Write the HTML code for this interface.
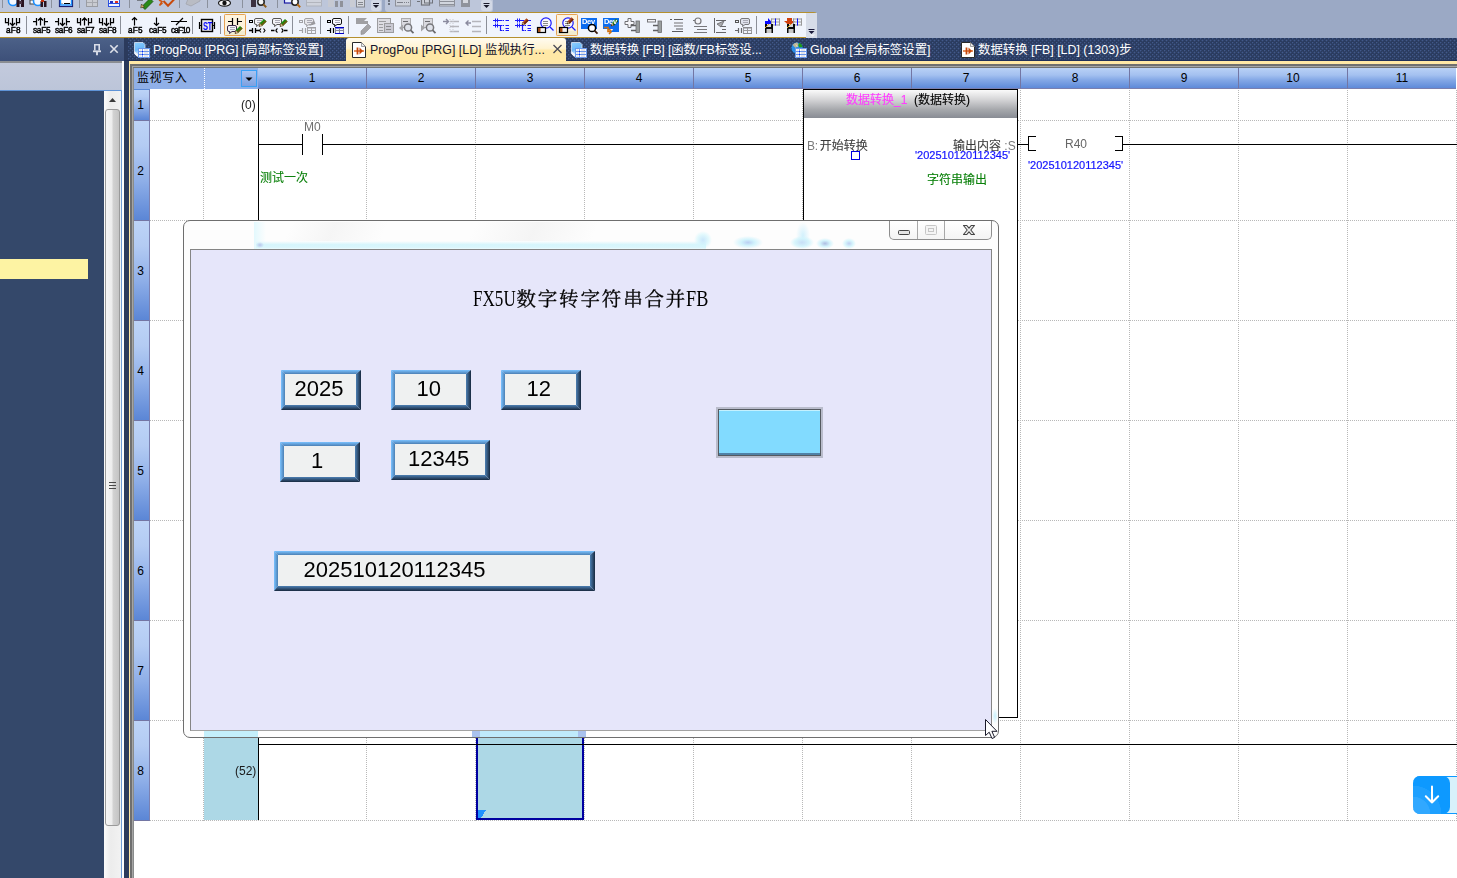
<!DOCTYPE html>
<html lang="zh-CN">
<head>
<meta charset="utf-8">
<title>ProgPou [PRG] [LD]</title>
<style>
*{box-sizing:border-box;margin:0;padding:0}
html,body{width:1457px;height:878px;overflow:hidden;background:#fff}
body{position:relative;font-family:"Liberation Sans","Noto Sans CJK SC",sans-serif;font-size:12px;color:#000}
.a{position:absolute}
.t{position:absolute;white-space:nowrap;line-height:1}
svg{position:absolute;overflow:visible}
/* top toolbars */
#topbg{left:0;top:0;width:1457px;height:38px;background:#9ba9c5}
#tb1a{left:0;top:0;width:382px;height:12px;background:#bdc6da;border-radius:0 0 3px 0}
#tb1b{left:385px;top:0;width:108px;height:12px;background:#bdc6da;border-radius:0 0 3px 3px}
#tb2{left:0;top:12px;width:817px;height:26px;background:#f0f4fc;border-top:1px solid #b4902f;border-bottom:1px solid #b4902f;border-right:1px solid #c9b06a;border-radius:0 3px 3px 0}
.sep{position:absolute;width:1px;background:#8d929c}
.lab{position:absolute;white-space:nowrap;font-size:8.2px;line-height:8px;letter-spacing:-0.2px;color:#000;-webkit-text-stroke:0.45px #000;will-change:transform;font-family:"Liberation Sans",sans-serif}
.hot{position:absolute;top:14px;width:23px;height:23px;background:#fdeccb;border:1px solid #e8a453;border-radius:2px}
/* tab strip */
#tabs{left:124px;top:38px;width:1333px;height:840px;background:#2b3a5c}
#tabtex{left:128px;top:38px;width:1329px;height:22px;background-color:#2a3b5f;background-image:radial-gradient(circle at 0.5px 0.5px,#42598a 0.6px,rgba(66,89,138,0) 1.2px),radial-gradient(circle at 2.5px 2.5px,#42598a 0.6px,rgba(66,89,138,0) 1.2px);background-size:4px 4px;border-bottom:0}
#tabline{left:124px;top:60px;width:1333px;height:1px;background:#1f2f58}
#edbg{left:134px;top:68px;width:1323px;height:810px;background:#fff}
.tabt{position:absolute;white-space:nowrap;top:43px;font-size:12.4px;line-height:14px;color:#fff;font-family:"Liberation Sans","Noto Sans CJK SC",sans-serif}
/* left panel */
#lp{left:0;top:38px;width:124px;height:840px;background:#34486a}
#lph{left:0;top:38px;width:124px;height:23px;background:linear-gradient(#4c6188,#3d5079)}
/* grid */
#colhdr{left:134px;top:68px;width:1323px;height:21px}
.ch{position:absolute;top:68px;height:21px;background:linear-gradient(#b9d1f6 0%,#a4c1f0 35%,#84a8e6 60%,#5e8ad9 100%);border-left:1px solid #7376a4;border-bottom:1px solid #7a7fae;text-align:center;font-size:12px;line-height:21px;color:#000}
.rh{position:absolute;left:134px;width:16px;padding-right:2px;background:linear-gradient(#bdd4f7 0%,#b3cbf3 25%,#8fafe8 60%,#5b86d6 100%);border-right:1px solid #7b80b0;border-bottom:1px solid #7376a4;font-size:12px;text-align:center;color:#000}
.num{font-family:"Liberation Sans",sans-serif}
.cj{-webkit-text-stroke:0.1px currentColor}
.bl{-webkit-text-stroke:0.2px #1414ff}
</style>
</head>
<body>
<div class="a" id="topbg"></div>
<div class="a" id="tb1a"></div>
<div class="a" id="tb1b"></div>
<div class="a" id="tb2"></div>
<svg style="left:0;top:0" width="1457" height="38" viewBox="0 0 1457 38"><g><rect x="2" y="0" width="1" height="8" fill="#8b919d"/><rect x="51" y="0" width="1" height="8" fill="#8b919d"/><rect x="79" y="0" width="1" height="8" fill="#8b919d"/><rect x="129" y="0" width="1" height="8" fill="#8b919d"/><rect x="179" y="0" width="1" height="8" fill="#8b919d"/><rect x="207" y="0" width="1" height="8" fill="#8b919d"/><rect x="242" y="0" width="1" height="8" fill="#8b919d"/><rect x="277" y="0" width="1" height="8" fill="#8b919d"/><circle cx="13" cy="1" r="4.5" fill="#f4f8ff" stroke="#1e90ff" stroke-width="1.600"/><rect x="16.5" y="0" width="3" height="7" fill="#2a1420"/><rect x="21" y="0" width="3" height="7" fill="#2a1420"/><rect x="19" y="1" width="3" height="3" fill="#463040"/><rect x="30" y="0" width="6" height="4" fill="#f2f6ff" stroke="#444" stroke-width="1"/><circle cx="38" cy="1" r="4.5" fill="#f4f8ff" stroke="#1e90ff" stroke-width="1.600"/><rect x="40.5" y="1" width="2.5" height="6" fill="#2a1420"/><rect x="44" y="1" width="2.5" height="6" fill="#2a1420"/><rect x="41" y="0" width="3" height="2" fill="#c03010"/><rect x="59.5" y="-2" width="13" height="8.5" fill="#fff" stroke="#1e1e6e" stroke-width="1.2"/><rect x="60.5" y="-2" width="11" height="7" fill="none" stroke="#1e90ff" stroke-width="1.4"/><rect x="64" y="3" width="6" height="1" fill="#000"/><rect x="61.5" y="3" width="1" height="1" fill="#777"/><rect x="86.5" y="-2" width="11" height="8.5" fill="#c9cbd1" stroke="#9a9ca2" stroke-width="1"/><path d="M87 2.5h10M92.5 0v6" stroke="#a6a8ae" stroke-width="1" fill="none"/><rect x="108.5" y="-2" width="11" height="8.5" fill="#eef2ff" stroke="#2a50e0" stroke-width="1"/><path d="M109 3.5h10" stroke="#2a50e0" stroke-width="1" fill="none"/><rect x="115" y="1" width="3" height="2" fill="#e03020"/><rect x="110" y="1" width="3" height="2" fill="#2030c0"/><path d="M142 6.5l8 -8l3 3l-8 8z" fill="#2a8a18" stroke="#14500c" stroke-width="0.800"/><path d="M141.5 4l3 3l-3.800 .800z" fill="#d9b070" stroke="#3a2a10" stroke-width="0.600"/><path d="M137 0h6" stroke="#333" stroke-width="1" fill="none"/><path d="M159 0l3 1.5l-2.5 4l3 -2.5" stroke="#d0540e" stroke-width="1.5" fill="none"/><path d="M163.5 1l4.5 4.800l6.5 -6.800" stroke="#c84a0c" stroke-width="2" fill="none"/><path d="M186 4l5 2l9 -5v-2h-12z" fill="#b9bcc4" stroke="#a2a5ad" stroke-width="0.800"/><ellipse cx="224.5" cy="3" rx="6" ry="3.200" fill="#f5f5f5" stroke="#1a1a1a" stroke-width="1.200"/><circle cx="224.5" cy="3" r="2.200" fill="#111"/><rect x="251" y="0" width="5" height="7" fill="#3a3040"/><circle cx="261" cy="2" r="3.2" fill="#f4f4f4" stroke="#222" stroke-width="1.5"/><path d="M263.24 4.24l3 3" stroke="#8a5a1a" stroke-width="1.8" fill="none"/><rect x="284.5" y="-2" width="10" height="5" fill="#e6eeff" stroke="#1818a0" stroke-width="1.2"/><circle cx="295" cy="2" r="3.2" fill="#fdfdfd" stroke="#222" stroke-width="1.5"/><path d="M297.24 4.24l3 3" stroke="#b86a10" stroke-width="1.8" fill="none"/><rect x="306.5" y="-2" width="15" height="8" fill="#cfd3dc" stroke="#aeb2bc" stroke-width="1"/><path d="M307 2.5h15" stroke="#b2b5bd" stroke-width="1" fill="none"/><rect x="328" y="0" width="6" height="7" fill="#c6c9d2"/><rect x="335" y="1" width="3" height="6" fill="#8f929b"/><rect x="340" y="1" width="3" height="6" fill="#8f929b"/><rect x="350" y="0" width="5" height="7" fill="#c9ccd4"/><rect x="356.5" y="-1" width="8" height="8" fill="#d5d8df" stroke="#85888f" stroke-width="1"/><path d="M358 2.5h5M358 4.5h5" stroke="#85888f" stroke-width="1" fill="none"/><rect x="371" y="0" width="10" height="11" fill="#d3d9e6" rx="2"/><path d="M373 3.5h6" stroke="#1a1a2a" stroke-width="1" fill="none"/><path d="M373 5h6l-3 3z" fill="#1a1a2a"/><rect x="388" y="0" width="2" height="2" fill="#6d7380"/><rect x="388" y="3" width="2" height="2" fill="#6d7380"/><rect x="395.5" y="-2" width="15" height="8" fill="#cdd1da" stroke="#8d9099" stroke-width="1"/><path d="M397 2.5h6M404 2.5h1M406 2.5h1M408 2.5h1" stroke="#7d8089" stroke-width="1" fill="none"/><rect x="421.5" y="-2" width="8" height="7" fill="#cdd1da" stroke="#6f727a" stroke-width="1.2"/><rect x="424.5" y="-2" width="8" height="5" fill="none" stroke="#6f727a" stroke-width="1"/><path d="M417 1.5h3" stroke="#6f727a" stroke-width="1" fill="none"/><rect x="439.5" y="-2" width="15" height="8" fill="#d2d6de" stroke="#8d9099" stroke-width="1"/><path d="M440 1.5h14M440 4.5h14" stroke="#8d9099" stroke-width="1" fill="none"/><rect x="461" y="0" width="9" height="7" fill="#8f939c"/><rect x="463" y="0" width="5" height="3" fill="#d5d8df"/><rect x="481" y="0" width="11" height="11" fill="#d3d9e6" rx="2"/><path d="M483.5 3.5h6" stroke="#1a1a2a" stroke-width="1" fill="none"/><path d="M483.5 5h6l-3 3z" fill="#1a1a2a"/></g><g><rect x="26" y="16" width="1" height="18" fill="#8b8f98"/><rect x="120" y="16" width="1" height="18" fill="#8b8f98"/><rect x="192" y="16" width="1" height="18" fill="#8b8f98"/><rect x="220" y="16" width="1" height="18" fill="#8b8f98"/><rect x="292" y="16" width="1" height="18" fill="#8b8f98"/><rect x="320" y="16" width="1" height="18" fill="#8b8f98"/><rect x="348" y="16" width="1" height="18" fill="#8b8f98"/><rect x="486" y="16" width="1" height="18" fill="#8b8f98"/><rect x="756" y="16" width="1" height="18" fill="#8b8f98"/><rect x="224.5" y="14.5" width="21" height="21" fill="#fdf3dc" stroke="#e6a255" stroke-width="1" rx="0.8"/><rect x="225" y="31" width="20" height="4" fill="#f1ecd0"/><rect x="556.5" y="14.5" width="21" height="21" fill="#fdf3dc" stroke="#e6a255" stroke-width="1" rx="0.8"/><rect x="557" y="31" width="20" height="4" fill="#f1ecd0"/><path d="M5.5 18v4.5h3M8.5 18v7.5M12.5 18V25.5M10.0 23.0L12.5 25.5L15.0 23.0M16.5 18v7.5M16.5 22.5h3v-4.5" stroke="#000" stroke-width="1.25" fill="none"/><path d="M33 21.5h3.5M36.5 18v7.5M40.5 18V25.5M38.0 20.5L40.5 18L43.0 20.5M44.5 18v7.5M44.5 21.5h3.5" stroke="#000" stroke-width="1.25" fill="none"/><path d="M55 21.5h3.5M58.5 18v7.5M62.5 18V25.5M60.0 23.0L62.5 25.5L65.0 23.0M66.5 18v7.5M66.5 21.5h3.5" stroke="#000" stroke-width="1.25" fill="none"/><path d="M77.5 18v4.5h3M80.5 18v7.5M84.5 18V25.5M82.0 20.5L84.5 18L87.0 20.5M88.5 18v7.5M88.5 22.5h3v-4.5" stroke="#000" stroke-width="1.25" fill="none"/><path d="M99.5 18v4.5h3M102.5 18v7.5M106.5 18V25.5M104.0 23.0L106.5 25.5L109.0 23.0M110.5 18v7.5M110.5 22.5h3v-4.5" stroke="#000" stroke-width="1.25" fill="none"/><path d="M134.5 17.5V25.5M132.0 20.0L134.5 17.5L137.0 20.0" stroke="#000" stroke-width="1.2" fill="none"/><path d="M156.5 17.5V25.5M154.0 23.0L156.5 25.5L159.0 23.0" stroke="#000" stroke-width="1.2" fill="none"/><path d="M171 21.5h16M176 25l7 -7" stroke="#000" stroke-width="1.2" fill="none"/><rect x="201.5" y="19.5" width="11" height="12" fill="#e9e9ee" stroke="#000" stroke-width="1.4"/><path d="M199.5 22v7M214.5 22v7M199 25.5h2M213 25.5h2" stroke="#000" stroke-width="1.2" fill="none"/><path d="M228 21.5h4.5M232.5 18v7M237.5 18v7M237.5 21.5h4.5" stroke="#000" stroke-width="1.2" fill="none"/><path d="M229 25.5h6q1.5 0 1.5 1.5v3q0 1.5 -1.5 1.5h-3l-2.5 2l.300 -2h-.800q-1.5 0 -1.5 -1.5v-3q0 -1.5 1.5 -1.5z" fill="#f4f4f8" stroke="#3a2a4a" stroke-width="1"/><path d="M229.5 27.5h5M229.5 29.5h5" stroke="#a9a9b4" stroke-width="1" fill="none" shape-rendering="crispEdges"/><path d="M235.66 30.31L240.05 25.93L242.57 28.45L238.19 32.84z" fill="#1a8a10"/><path d="M236.92 31.58L241.31 27.19L242.57 28.45L238.19 32.84z" fill="#6a5a10"/><path d="M235 33.5L235.66 30.31L238.19 32.84z" fill="#f0d49a" stroke="#4a2a10" stroke-width="0.5"/><path d="M235 33.5l1.300 -0.300l-1 -1z" fill="#2a1408"/><rect x="249.5" y="20.5" width="3" height="2" fill="none" stroke="#000" stroke-width="1"/><path d="M256 18.5h6q1.5 0 1.5 1.5v3q0 1.5 -1.5 1.5h-3l-2.5 2l.300 -2h-.800q-1.5 0 -1.5 -1.5v-3q0 -1.5 1.5 -1.5z" fill="#f4f4f8" stroke="#555" stroke-width="1"/><path d="M256.5 20.5h5M256.5 22.5h5" stroke="#a9a9b4" stroke-width="1" fill="none" shape-rendering="crispEdges"/><path d="M259.66 23.31L264.05 18.93L266.57 21.45L262.19 25.84z" fill="#1a8a10"/><path d="M260.92 24.58L265.31 20.19L266.57 21.45L262.19 25.84z" fill="#6a5a10"/><path d="M259 26.5L259.66 23.31L262.19 25.84z" fill="#f0d49a" stroke="#4a2a10" stroke-width="0.5"/><path d="M259 26.5l1.300 -0.300l-1 -1z" fill="#2a1408"/><path d="M249 30.5h3M252.5 28v5M255.5 28v5M255.5 30.5h4" stroke="#000" stroke-width="1.3" fill="none"/><path d="M261 28.5l-1.5 2l1.5 2M263.5 28.5l1.5 2l-1.5 2" stroke="#000" stroke-width="1.1" fill="none"/><path d="M274 18.5h6q1.5 0 1.5 1.5v3q0 1.5 -1.5 1.5h-3l-2.5 2l.300 -2h-.800q-1.5 0 -1.5 -1.5v-3q0 -1.5 1.5 -1.5z" fill="#f4f4f8" stroke="#555" stroke-width="1"/><path d="M274.5 20.5h5M274.5 22.5h5" stroke="#a9a9b4" stroke-width="1" fill="none" shape-rendering="crispEdges"/><path d="M280.66 23.31L285.05 18.93L287.57 21.45L283.19 25.84z" fill="#1a8a10"/><path d="M281.92 24.58L286.31 20.19L287.57 21.45L283.19 25.84z" fill="#6a5a10"/><path d="M280 26.5L280.66 23.31L283.19 25.84z" fill="#f0d49a" stroke="#4a2a10" stroke-width="0.5"/><path d="M280 26.5l1.300 -0.300l-1 -1z" fill="#2a1408"/><path d="M271 30.5h3.5M277.5 28.5q-3 2 0 4M281.5 28.5q3 2 0 4M284 30.5h3.5" stroke="#000" stroke-width="1.3" fill="none"/><rect x="299.5" y="20.5" width="3" height="2" fill="none" stroke="#a2a2a6" stroke-width="1"/><path d="M306 18.5h6q1.5 0 1.5 1.5v3q0 1.5 -1.5 1.5h-3l-2.5 2l.300 -2h-.800q-1.5 0 -1.5 -1.5v-3q0 -1.5 1.5 -1.5z" fill="#e6e6ea" stroke="#a2a2a6" stroke-width="1"/><path d="M306.5 20.5h5M306.5 22.5h5" stroke="#a9a9b4" stroke-width="1" fill="none" shape-rendering="crispEdges"/><path d="M309 26l5 -6l1.5 4z" fill="#9a9a9e"/><path d="M299 30.5h3M302.5 28v5M305.5 28v5" stroke="#a2a2a6" stroke-width="1.2" fill="none"/><rect x="307" y="27" width="9" height="1.5" fill="#a0a0a4"/><rect x="307" y="33" width="9" height="1" fill="#a0a0a4"/><path d="M307 30.5h9M307.5 28v5M311.5 28v5M315.5 28v5" stroke="#a8a8ac" stroke-width="1" fill="none"/><rect x="327.5" y="20.5" width="3" height="2" fill="none" stroke="#000" stroke-width="1"/><path d="M334 18.5h6q1.5 0 1.5 1.5v3q0 1.5 -1.5 1.5h-3l-2.5 2l.300 -2h-.800q-1.5 0 -1.5 -1.5v-3q0 -1.5 1.5 -1.5z" fill="#fbfbff" stroke="#111" stroke-width="1"/><path d="M334.5 20.5h5M334.5 22.5h5" stroke="#a9a9b4" stroke-width="1" fill="none" shape-rendering="crispEdges"/><path d="M327 30.5h3M330.5 28v5M333.5 28v5" stroke="#000" stroke-width="1.2" fill="none"/><rect x="335" y="27" width="9" height="1.5" fill="#0000c8"/><rect x="335" y="33" width="9" height="1" fill="#0000c8"/><path d="M335 30.5h9M335.5 28v5M339.5 28v5M343.5 28v5" stroke="#8a8a9a" stroke-width="1" fill="none"/><path d="M356 18h11l-3 3l4 0l0 3h-12z" fill="#a0a0a3"/><path d="M361 31l7 -7l3 3l-7 7l-3 .5z" fill="#a4a4a7" stroke="#8b8b8e" stroke-width="0.600"/><rect x="377.5" y="18.5" width="13" height="14" fill="#dcdce2" stroke="#9c9c9f" stroke-width="1"/><path d="M379 21.5h7M379 24.5h4M379 27.5h4M379 30.5h4" stroke="#9c9c9f" stroke-width="1" fill="none"/><rect x="384.5" y="23.5" width="9" height="9" fill="#c9c9d2" stroke="#9c9c9f" stroke-width="1"/><path d="M386 26.5h5M386 29.5h5" stroke="#8a8a8e" stroke-width="1" fill="none"/><rect x="401.5" y="18.5" width="9" height="9" fill="#d9d9df" stroke="#aaaaae" stroke-width="1"/><path d="M403 21.5h5" stroke="#6a6a6e" stroke-width="1" fill="none"/><circle cx="408" cy="27.5" r="3.6" fill="#dfe2ea" stroke="#77777b" stroke-width="1.5"/><path d="M410.52 30.02l3 3" stroke="#6b6b6f" stroke-width="1.8" fill="none"/><path d="M399 28l4 -3.5v7z" fill="#a4a4a8"/><rect x="423.5" y="18.5" width="9" height="9" fill="#d9d9df" stroke="#aaaaae" stroke-width="1"/><path d="M425 21.5h5" stroke="#6a6a6e" stroke-width="1" fill="none"/><circle cx="430" cy="27.5" r="3.6" fill="#dfe2ea" stroke="#77777b" stroke-width="1.5"/><path d="M432.52 30.02l3 3" stroke="#6b6b6f" stroke-width="1.8" fill="none"/><path d="M425 28l-4 -3.5v7z" fill="#a4a4a8"/><path d="M443 21.5h5M446 19l2.5 2.5l-2.5 2.5" stroke="#8a8a9e" stroke-width="1.4" fill="none"/><path d="M450 21.5h9M450 26.5h9M450 31.5h9" stroke="#b5b5bb" stroke-width="1.4" fill="none"/><path d="M450 19v14M453 19v14" stroke="#c9c9cf" stroke-width="1" fill="none" stroke-dasharray="1 1"/><path d="M471 23h-5M468.5 20.5l-2.5 2.5l2.5 2.5" stroke="#8a8a9e" stroke-width="1.4" fill="none"/><path d="M472 21.5h9M472 26.5h9M472 31.5h9" stroke="#b5b5bb" stroke-width="1.4" fill="none"/><path d="M493 20.5h16M493 25.5h16M500.5 25.5v5h8M503 28.5h6" stroke="#1a1aff" stroke-width="1.2" fill="none"/><path d="M495.5 18.5v4M497.5 18.5v4M495.5 23.5v4M497.5 23.5v4" stroke="#1a1aff" stroke-width="1" fill="none"/><rect x="502.5" y="18.5" width="3" height="12.5" fill="#f0f4fc"/><path d="M503 20.5h1M506 20.5h3M503 25.5h1M506 25.5h3M503 30.5h1M506 30.5h3" stroke="#1a1aff" stroke-width="1.2" fill="none"/><path d="M515 20.5h16M515 25.5h16M522.5 25.5v5h8M525 28.5h6" stroke="#1a1aff" stroke-width="1.2" fill="none"/><path d="M517.5 18.5v4M519.5 18.5v4M517.5 23.5v4M519.5 23.5v4" stroke="#1a1aff" stroke-width="1" fill="none"/><rect x="524.5" y="18.5" width="3" height="12.5" fill="#f0f4fc"/><path d="M525 25.5h1M528 25.5h3M525 30.5h1M528 30.5h3" stroke="#1a1aff" stroke-width="1.2" fill="none"/><path d="M522.58 22.19L526.45 18.32L528.68 20.55L524.81 24.42z" fill="#b4461a"/><path d="M523.7 23.3L527.57 19.43L528.68 20.55L524.81 24.42z" fill="#6a2408"/><path d="M522 25L522.58 22.19L524.81 24.42z" fill="#f0d49a" stroke="#4a2a10" stroke-width="0.5"/><path d="M522 25l1.300 -0.300l-1 -1z" fill="#2a1408"/><circle cx="546" cy="23" r="5.200" fill="#f8f8fc" stroke="#1a1aff" stroke-width="1.200"/><path d="M550 27l3.5 3.5" stroke="#1a1aff" stroke-width="1.2" fill="none"/><path d="M543 21.5h5M543 23.5h5M543 25.5h5" stroke="#8a8a8a" stroke-width="1" fill="none"/><rect x="537.5" y="27.5" width="8" height="5" fill="#f2f2f2" stroke="#000" stroke-width="1.2"/><rect x="538" y="28" width="2.5" height="4" fill="#a04a14"/><circle cx="568" cy="23" r="5.200" fill="#f8f8fc" stroke="#1a1aff" stroke-width="1.200"/><path d="M572 27l3.5 3.5" stroke="#1a1aff" stroke-width="1.2" fill="none"/><path d="M565 21.5h5M565 23.5h5M565 25.5h5" stroke="#8a8a8a" stroke-width="1" fill="none"/><rect x="559.5" y="27.5" width="8" height="5" fill="#f2f2f2" stroke="#000" stroke-width="1.2"/><rect x="560" y="28" width="2.5" height="4" fill="#a04a14"/><path d="M567.58 21.19L571.45 17.32L573.68 19.55L569.81 23.42z" fill="#b4461a"/><path d="M568.7 22.3L572.57 18.43L573.68 19.55L569.81 23.42z" fill="#6a2408"/><path d="M567 24L567.58 21.19L569.81 23.42z" fill="#f0d49a" stroke="#4a2a10" stroke-width="0.5"/><path d="M567 24l1.300 -0.300l-1 -1z" fill="#2a1408"/><rect x="581" y="18" width="16" height="11" fill="#0a6cf0"/><rect x="603" y="18" width="16" height="11" fill="#0a6cf0"/><circle cx="592" cy="28" r="3.6" fill="#fff" stroke="#000" stroke-width="1.5"/><path d="M594.52 30.52l3 3" stroke="#3a1a0a" stroke-width="1.8" fill="none"/><path d="M604 27.5h4v4h3M609 29l2.5 2.5l-2.5 2.5" stroke="#d0700e" stroke-width="1.6" fill="none"/><path d="M611 27h8v5h-8l2 -2.5z" fill="#0a6cf0"/><path d="M611.62 23L615.75 18.87L618.13 21.25L614 25.38z" fill="#2a8a18"/><path d="M612.81 24.19L616.94 20.06L618.13 21.25L614 25.38z" fill="#14500c"/><path d="M611 26L611.62 23L614 25.38z" fill="#f0d49a" stroke="#4a2a10" stroke-width="0.5"/><path d="M611 26l1.300 -0.300l-1 -1z" fill="#2a1408"/><path d="M628 18.5h3v3h3v3h-3v3h-3v-3h-3v-3h3z" fill="#f6f6fa" stroke="#6f6f73" stroke-width="1"/><rect x="647.5" y="19.5" width="8" height="2.5" fill="#f4f4f8" stroke="#77777a" stroke-width="1"/><rect x="636" y="21" width="3.5" height="11.5" fill="#9a9e9e" stroke="#6d6d70" stroke-width="0.8"/><path d="M631 25.5h5M631 30.5h5" stroke="#5f5f62" stroke-width="1.6" fill="none"/><rect x="658" y="21" width="3.5" height="11.5" fill="#9a9e9e" stroke="#6d6d70" stroke-width="0.8"/><path d="M653 25.5h5M653 30.5h5" stroke="#5f5f62" stroke-width="1.6" fill="none"/><path d="M670 19.5h2M674 19.5h9M674 23h9M674 26h9M676 29h7M672 31.5h11" stroke="#5a5a5e" stroke-width="1" fill="none"/><path d="M674 23h9M674 26h9" stroke="#bdbdc1" stroke-width="1" fill="none"/><circle cx="698" cy="21" r="3" fill="#f4f4f8" stroke="#77777b" stroke-width="1.200"/><path d="M693 20.5h2" stroke="#77777b" stroke-width="1" fill="none"/><path d="M694 26.5h13M697 29.5h10M694 32.5h13" stroke="#77777b" stroke-width="1" fill="none"/><path d="M714.5 18v15M716 20.5h10M716 32.5h10M720 26.5h6M722 29.5h4" stroke="#66666a" stroke-width="1" fill="none"/><path d="M717 24l7 -3l-3 6z" fill="#a9a9ad" stroke="#66666a" stroke-width="0.800"/><rect x="735.5" y="20.5" width="3" height="2" fill="none" stroke="#555" stroke-width="1"/><path d="M742 18.5h6q1.5 0 1.5 1.5v3q0 1.5 -1.5 1.5h-3l-2.5 2l.300 -2h-.800q-1.5 0 -1.5 -1.5v-3q0 -1.5 1.5 -1.5z" fill="#dfe2ec" stroke="#77777b" stroke-width="1"/><path d="M742.5 20.5h5M742.5 22.5h5" stroke="#a9a9b4" stroke-width="1" fill="none" shape-rendering="crispEdges"/><path d="M735 30.5h3M738.5 28v5M741.5 28v5" stroke="#66666a" stroke-width="1.2" fill="none"/><rect x="743" y="27" width="9" height="1.5" fill="#8a8a8e"/><rect x="743" y="33" width="9" height="1" fill="#8a8a8e"/><path d="M743 30.5h9M743.5 28v5M747.5 28v5M751.5 28v5" stroke="#9a9a9e" stroke-width="1" fill="none"/><path d="M765 21h3v-3l4 4.5l-4 4.5v-3h-3z" fill="#0a0aff"/><path d="M771 19.0h9M771 22.0h9M771 25.0h9M771.5 18.5v7M775.5 18.5v7M779.5 18.5v7" stroke="#9a9a9a" stroke-width="1" fill="none"/><path d="M775.5 18.5v7" stroke="#1010ff" stroke-width="1" fill="none"/><rect x="765" y="24" width="8" height="9" fill="#0a0a0a"/><rect x="766.5" y="29" width="5" height="4" fill="#c9c9c9"/><rect x="767" y="24" width="4" height="3" fill="#d8d8d8"/><path d="M765 28l4 -4" stroke="#d9a520" stroke-width="1" fill="none"/><path d="M787 18h5v3h3l-5.5 5l-5.5 -5h3z" fill="#d0400e"/><path d="M793 19.0h9M793 22.0h9M793 25.0h9M793.5 18.5v7M797.5 18.5v7M801.5 18.5v7" stroke="#9a9a9a" stroke-width="1" fill="none"/><path d="M797.5 18.5v7" stroke="#1010ff" stroke-width="1" fill="none"/><rect x="787" y="24" width="8" height="9" fill="#0a0a0a"/><rect x="788.5" y="29" width="5" height="4" fill="#c9c9c9"/><rect x="789" y="24" width="4" height="3" fill="#d8d8d8"/><path d="M787 28l4 -4" stroke="#d9a520" stroke-width="1" fill="none"/><rect x="806" y="13" width="11" height="25" fill="#d6dce8"/><path d="M808.5 29.5h6" stroke="#1a1a3a" stroke-width="1" fill="none"/><path d="M808.5 31h6l-3 3z" fill="#1a1a3a"/><path d="M809.5 34.5h6l-3 2z" fill="#fff" opacity="0.700"/></g></svg>
<div class="lab" style="left:5.5px;top:26.5px;letter-spacing:0.200px">aF8</div><div class="lab" style="left:32.5px;top:26.5px;letter-spacing:-0.250px">saF5</div><div class="lab" style="left:54.5px;top:26.5px;letter-spacing:-0.250px">saF6</div><div class="lab" style="left:76.5px;top:26.5px;letter-spacing:-0.250px">saF7</div><div class="lab" style="left:98.5px;top:26.5px;letter-spacing:-0.250px">saF8</div><div class="lab" style="left:127.5px;top:26.5px;letter-spacing:0.200px">aF5</div><div class="lab" style="left:148.5px;top:26.5px;letter-spacing:-0.250px">caF5</div><div class="lab" style="left:170.5px;top:26.5px;letter-spacing:-0.850px">caF10</div><div class="lab" style="left:203px;top:20.5px;font-size:11px;line-height:10px;font-weight:bold;color:#0a0aff;letter-spacing:-0.5px;-webkit-text-stroke:0;transform:scaleX(0.68);transform-origin:0 0">ST</div><div class="lab" style="left:582px;top:17.5px;font-size:7.5px;line-height:8px;font-weight:bold;color:#fff;letter-spacing:-0.300px;-webkit-text-stroke:0">Dev</div><div class="lab" style="left:604px;top:17.5px;font-size:7.5px;line-height:8px;font-weight:bold;color:#fff;letter-spacing:-0.300px;-webkit-text-stroke:0">Dev</div>
<div class="a" id="lp"></div>
<div class="a" id="lph"></div>
<div class="a" style="left:0;top:61px;width:124px;height:2px;background:#8a8d92"></div>
<div class="a" style="left:0;top:63px;width:122px;height:27px;background:linear-gradient(#c3cadd,#bcc5d9)"></div>
<div class="a" style="left:0;top:90px;width:122px;height:1px;background:#5f93d6"></div>
<div class="a" style="left:104px;top:91px;width:17px;height:787px;background:linear-gradient(90deg,#fbfbfb,#ececec 40%,#f2f2f2)"></div>
<div class="a" style="left:121px;top:90px;width:1px;height:788px;background:#6d9bd8"></div>
<div class="a" style="left:122px;top:61px;width:2px;height:817px;background:#fdfdfd"></div>
<div class="a" style="left:105px;top:109px;width:15px;height:717px;border:1px solid #9a9a9a;border-radius:3px;background:linear-gradient(90deg,#f6f6f6 0%,#ededed 45%,#d2d2d2 55%,#c4c4c4 100%)"></div>
<div class="a" style="left:0;top:259px;width:88px;height:20px;background:#fdf3a3"></div>
<svg style="left:104px;top:91px" width="17" height="20" viewBox="0 0 17 20"><path d="M5 11 L8.5 7 L12 11 Z" fill="#3a3a3a"/></svg>
<svg style="left:104px;top:478px" width="17" height="16" viewBox="0 0 17 16"><path d="M5 4.5h7M5 7.5h7M5 10.5h7" stroke="#4a4a4a" stroke-width="1" fill="none"/></svg>
<svg style="left:92px;top:42px" width="30" height="16" viewBox="0 0 30 16"><path d="M2.800 8.5V2.800H7.200V8.5" stroke="#d9dde8" stroke-width="1.600" fill="none"/><path d="M1 9.300H9" stroke="#d9dde8" stroke-width="1.800" fill="none"/><path d="M5 10V13.300" stroke="#d9dde8" stroke-width="1.900" fill="none"/><path d="M18.300 3.300l7.400 7.400M25.700 3.300l-7.400 7.400" stroke="#dfe2ea" stroke-width="1.600" fill="none"/></svg>
<div class="a" id="tabs"></div>
<div class="a" id="tabtex"></div>
<div class="a" id="tabline"></div>
<div class="a" id="edbg"></div>
<div class="a" style="left:346px;top:38px;width:220px;height:23px;background:linear-gradient(#fffbf0 0%,#fff3d0 45%,#ffe8a6 55%,#ffe8a6 100%);border-radius:3px 3px 0 0"></div>
<div class="a" style="left:129px;top:61px;width:1328px;height:3px;background:#ffe8a6"></div>
<div class="a" style="left:129px;top:64px;width:1px;height:814px;background:#ffe8a6"></div>
<div class="a" style="left:130px;top:64px;width:1327px;height:2px;background:#6f6f6f"></div>
<div class="a" style="left:132px;top:66px;width:1325px;height:1px;background:#a5a5a5"></div>
<div class="a" style="left:133px;top:67px;width:1324px;height:1px;background:#6f7272"></div>
<div class="a" style="left:130px;top:64px;width:2px;height:814px;background:#6f6f6f"></div>
<div class="a" style="left:132px;top:67px;width:1px;height:811px;background:#a5a5a5"></div>
<div class="a" style="left:133px;top:68px;width:1px;height:810px;background:#8a8c8c"></div>
<div class="tabt" id="tab0" style="left:153px;color:#fff">ProgPou [PRG] [局部标签设置]</div>
<div class="tabt" id="tab1" style="left:370px;color:#14142e">ProgPou [PRG] [LD] 监视执行...</div>
<div class="tabt" id="tab2" style="left:590px;color:#fff;letter-spacing:-0.12px">数据转换 [FB] [函数/FB标签设...</div>
<div class="tabt" id="tab3" style="left:810px;color:#fff">Global [全局标签设置]</div>
<div class="tabt" id="tab4" style="left:978px;color:#fff">数据转换 [FB] [LD] (1303)步</div>
<svg style="left:0;top:38px" width="1457" height="23" viewBox="0 38 1457 23"><g><defs><linearGradient id="liga" x1="0" y1="0" x2="0.300" y2="1"><stop offset="0" stop-color="#8fd0ff"/><stop offset="0.550" stop-color="#6ab8f8"/><stop offset="1" stop-color="#f4f8ff"/></linearGradient></defs><path d="M134.5 42.5h8.5l2 2v11.5h-8l-2.5 -2.5z" fill="url(#liga)" stroke="#d9e6f6" stroke-width="0.800"/><path d="M134.5 51v3l2.5 2.5h3z" fill="#f4f6fa"/><rect x="138.5" y="48.5" width="11" height="9" fill="#fdfdff" stroke="#6a98ea" stroke-width="1"/><path d="M139 51.5h10M139 54.5h10" stroke="#6a98ea" stroke-width="1" fill="none"/><path d="M142.5 49v8" stroke="#7aa6f0" stroke-width="1" fill="none"/><path d="M139.5 50h2M144 50h4M139.5 53h2M144 53h4M139.5 56h2M144 56h4" stroke="#c9ccd6" stroke-width="1" fill="none"/><rect x="142" y="51" width="1" height="1" fill="#0a1aff"/><rect x="142" y="54" width="1" height="1" fill="#0a1aff"/></g><path d="M352.5 42.5h9l4 4v11h-13z" fill="#fff" stroke="#2a2a2a" stroke-width="1"/><path d="M361.5 42.5v4h4" fill="#e9e9e9" stroke="#8a8a8a" stroke-width="0.800"/><path d="M354 51h10" stroke="#d8601e" stroke-width="1.400"/><path d="M357.5 47.5v7" stroke="#c8480a" stroke-width="1.800"/><path d="M359.5 47.5l3.5 3.5l-3.5 3.5z" fill="#c8480a"/><path d="M553.5 45l8 8M561.5 45l-8 8" stroke="#4a4a55" stroke-width="1.3" fill="none"/><g><defs><linearGradient id="ligb" x1="0" y1="0" x2="0.300" y2="1"><stop offset="0" stop-color="#8fd0ff"/><stop offset="0.550" stop-color="#6ab8f8"/><stop offset="1" stop-color="#f4f8ff"/></linearGradient></defs><path d="M571.5 42.5h8.5l2 2v11.5h-8l-2.5 -2.5z" fill="url(#ligb)" stroke="#d9e6f6" stroke-width="0.800"/><path d="M571.5 51v3l2.5 2.5h3z" fill="#f4f6fa"/><rect x="575.5" y="48.5" width="11" height="9" fill="#fdfdff" stroke="#6a98ea" stroke-width="1"/><path d="M576 51.5h10M576 54.5h10" stroke="#6a98ea" stroke-width="1" fill="none"/><path d="M579.5 49v8" stroke="#7aa6f0" stroke-width="1" fill="none"/><path d="M576.5 50h2M581 50h4M576.5 53h2M581 53h4M576.5 56h2M581 56h4" stroke="#c9ccd6" stroke-width="1" fill="none"/><rect x="579" y="51" width="1" height="1" fill="#0a1aff"/><rect x="579" y="54" width="1" height="1" fill="#0a1aff"/></g><g><circle cx="797" cy="48" r="5.800" fill="#2a8ee6" stroke="#123a6a" stroke-width="0.700" stroke-dasharray="1.5 1.200"/><path d="M799 43q3 .5 3.5 4l-3 .5l-1.5 -2.5z" fill="#1f9a1a"/><path d="M792.5 45q2 -3 5 -2.5l1 2.5l-3 3z" fill="#b9b39a"/><path d="M795 43.5l3 3l-1 .800z" fill="#f2e9a0"/><rect x="795.5" y="48.5" width="11" height="9" fill="#fdfdff" stroke="#6a98ea" stroke-width="1"/><path d="M796 51.5h10M796 54.5h10" stroke="#6a98ea" stroke-width="1" fill="none"/><path d="M799.5 49v8" stroke="#7aa6f0" stroke-width="1" fill="none"/><path d="M796.5 50h2M801 50h4M796.5 53h2M801 53h4M796.5 56h2M801 56h4" stroke="#c9ccd6" stroke-width="1" fill="none"/><rect x="799" y="51" width="1" height="1" fill="#0a1aff"/><rect x="799" y="54" width="1" height="1" fill="#0a1aff"/></g><path d="M961.5 42.5h9l4 4v11h-13z" fill="#fff" stroke="#2a2a2a" stroke-width="1"/><path d="M970.5 42.5v4h4" fill="#e9e9e9" stroke="#8a8a8a" stroke-width="0.800"/><path d="M963 51h10" stroke="#d8601e" stroke-width="1.400"/><path d="M966.5 47.5v7" stroke="#c8480a" stroke-width="1.800"/><path d="M968.5 47.5l3.5 3.5l-3.5 3.5z" fill="#c8480a"/></svg>
<div class="a" style="left:134px;top:68px;width:124px;height:21px;background:#90b0e8"></div>
<div class="t" style="left:137px;top:72px;font-size:12px;letter-spacing:0.600px;font-family:'Liberation Sans','Noto Sans CJK SC',sans-serif">监视写入</div>
<div class="a" style="left:204px;top:68px;width:1px;height:21px;background:repeating-linear-gradient(#fff 0 1px,transparent 1px 2px)"></div>
<div class="a" style="left:241px;top:70px;width:16px;height:17px;border:1px solid #3aa0f5;background:linear-gradient(#a9c4f1,#7da0e0)"></div>
<svg style="left:241px;top:70px" width="16" height="17" viewBox="0 0 16 17"><path d="M4.5 7.5h7L8 11z" fill="#000"/></svg>
<div class="ch num" style="left:258px;width:108px;border-left:0;">1</div>
<div class="ch num" style="left:366px;width:109px;">2</div>
<div class="ch num" style="left:475px;width:109px;">3</div>
<div class="ch num" style="left:584px;width:109px;">4</div>
<div class="ch num" style="left:693px;width:109px;">5</div>
<div class="ch num" style="left:802px;width:109px;">6</div>
<div class="ch num" style="left:911px;width:109px;">7</div>
<div class="ch num" style="left:1020px;width:109px;">8</div>
<div class="ch num" style="left:1129px;width:109px;">9</div>
<div class="ch num" style="left:1238px;width:109px;">10</div>
<div class="ch num" style="left:1347px;width:109px;">11</div>
<div class="rh num" style="top:89px;height:32px;line-height:33px">1</div>
<div class="rh num" style="top:121px;height:100px;line-height:101px">2</div>
<div class="rh num" style="top:221px;height:100px;line-height:101px">3</div>
<div class="rh num" style="top:321px;height:100px;line-height:101px">4</div>
<div class="rh num" style="top:421px;height:100px;line-height:101px">5</div>
<div class="rh num" style="top:521px;height:100px;line-height:101px">6</div>
<div class="rh num" style="top:621px;height:100px;line-height:101px">7</div>
<div class="rh num" style="top:721px;height:100px;line-height:101px">8</div>
<div class="a" style="left:134px;top:89px;width:16px;height:1px;background:#5b8ad8"></div>
<svg style="left:0;top:0" width="1457" height="878" viewBox="0 0 1457 878" shape-rendering="crispEdges"><g stroke="#b8b8b8" stroke-width="1" stroke-dasharray="1 1" fill="none"><path d="M203.5 90V821"/><path d="M366.5 90V821"/><path d="M475.5 90V821"/><path d="M584.5 90V821"/><path d="M693.5 90V821"/><path d="M802.5 90V821"/><path d="M911.5 90V821"/><path d="M1020.5 90V821"/><path d="M1129.5 90V821"/><path d="M1238.5 90V821"/><path d="M1347.5 90V821"/><path d="M1456.5 90V821"/><path d="M150 120.5H1457"/><path d="M150 220.5H1457"/><path d="M150 320.5H1457"/><path d="M150 420.5H1457"/><path d="M150 520.5H1457"/><path d="M150 620.5H1457"/><path d="M150 720.5H1457"/><path d="M150 820.5H1457"/></g><rect x="204" y="721" width="54" height="99" fill="#add8e6"/><rect x="476" y="721" width="108" height="99" fill="#add8e6"/><rect x="477" y="722" width="106" height="97" fill="none" stroke="#0000a0" stroke-width="2"/><path d="M478 810h8l-5 8h-3z" fill="#1e90ff"/><g stroke="#000" stroke-width="1" fill="none"><path d="M258.5 89V820"/><path d="M259 144.5H302M323 144.5H803"/><path d="M302.5 134V155M322.5 134V155"/><path d="M1018 144.5H1028M1123 144.5H1457"/><path d="M1036 136.5H1028.5V150.5H1036M1115 136.5H1122.5V150.5H1115"/><path d="M259 744.5H1457"/></g><rect x="803.5" y="89.5" width="214" height="628" fill="#fff" stroke="#000" stroke-width="1"/><defs><linearGradient id="fbh" x1="0" y1="0" x2="0" y2="1"><stop offset="0" stop-color="#fafafa"/><stop offset="0.35" stop-color="#d4d4d6"/><stop offset="0.7" stop-color="#a6a8ac"/><stop offset="1" stop-color="#888c94"/></linearGradient></defs><rect x="804" y="90" width="213" height="28" fill="url(#fbh)"/><rect x="851.5" y="151.5" width="8" height="8" fill="none" stroke="#0000e0" stroke-width="1"/></svg>
<div class="t num" style="left:241px;top:99px;font-size:12px;color:#1a1a1a">(0)</div>
<div class="t num" style="left:235px;top:765px;font-size:12px;color:#1a1a1a">(52)</div>
<div class="t num" style="left:304px;top:121px;font-size:12px;color:#6e6e6e">M0</div>
<div class="t cj" style="left:260px;top:172px;font-size:12px;color:#0a800a">测试一次</div>
<div class="t cj" style="left:846px;top:94px;font-size:12px;color:#ff3cff">数据转换_1</div>
<div class="t cj" style="left:914px;top:94px;font-size:12px;color:#000">(数据转换)</div>
<div class="t" style="left:807px;top:140px;font-size:12px;color:#3c3c3c"><span style="color:#7a7a7a;letter-spacing:-0.3px">B:</span> <span class="cj" style="margin-left:-1.4px">开始转换</span></div>
<div class="t" style="left:953px;top:140px;font-size:12px;color:#3c3c3c"><span class="cj">输出内容</span> <span style="color:#7a7a7a">:S</span></div>
<div class="t num bl" style="left:915px;top:150px;font-size:11px;color:#1414ff">'202510120112345'</div>
<div class="t cj" style="left:927px;top:173.5px;font-size:12px;color:#0a800a">字符串输出</div>
<div class="t num" style="left:1065px;top:138px;font-size:12px;color:#666">R40</div>
<div class="t num bl" style="left:1028px;top:159.5px;font-size:11px;color:#1414ff">'202510120112345'</div>
<div class="a" style="left:1413px;top:776px;width:44px;height:38px;background:#d8f1fb;border-top:1px solid #0d99ff;border-bottom:1px solid #0d99ff;border-radius:7px 0 0 7px"></div>
<div class="a" style="left:1413px;top:776px;width:37px;height:38px;background:radial-gradient(circle at 0 100%,rgba(255,255,255,.15) 0,rgba(255,255,255,.15) 17px,rgba(255,255,255,.07) 17.5px,rgba(255,255,255,.07) 28px,rgba(255,255,255,0) 28.5px),#0d99ff;border-radius:7px"></div>
<svg style="left:1413px;top:776px" width="37" height="38" viewBox="0 0 37 38"><path d="M19 10.5V26.5M12.8 20.300l6.200 6.200l6.200 -6.200" stroke="#fff" stroke-width="2" fill="none" stroke-linecap="round" stroke-linejoin="round"/></svg>
<div class="a" id="dlg" style="left:183px;top:220px;width:816px;height:518px;background:#fdfdfd;border:1px solid #6e6e6e;border-radius:7px"></div>
<div class="a" style="left:254px;top:222px;width:12px;height:27px;background:linear-gradient(90deg,rgba(224,248,253,0.9),rgba(255,255,255,0))"></div>
<div class="a" style="left:256px;top:241px;width:450px;height:8px;background:linear-gradient(rgba(222,247,253,0),rgba(214,245,252,1) 45%,rgba(218,246,252,1) 80%,rgba(235,250,254,.9))"></div>
<div class="a" style="left:266px;top:222px;width:430px;height:19px;background:linear-gradient(115deg,rgba(240,240,240,0) 0,rgba(240,240,240,0) 6%,rgba(240,240,240,.6) 16%,rgba(240,240,240,0) 28%,rgba(240,240,240,0) 48%,rgba(240,240,240,.65) 62%,rgba(240,240,240,0) 76%)"></div>
<div class="a" style="left:256px;top:242px;width:8px;height:6px;border-radius:3px;background:radial-gradient(closest-side,#b9c6ec,rgba(190,220,250,0))"></div>
<div class="a" style="left:694px;top:231px;width:18px;height:18px;background:radial-gradient(closest-side,rgba(196,228,250,.9),rgba(212,246,252,.7) 60%,rgba(255,255,255,0))"></div>
<div class="a" style="left:733px;top:236px;width:30px;height:13px;background:radial-gradient(closest-side,rgba(170,196,240,.8),rgba(204,242,252,.9) 45%,rgba(255,255,255,0))"></div>
<div class="a" style="left:796px;top:222px;width:14px;height:27px;background:radial-gradient(closest-side,rgba(208,240,252,.95),rgba(255,255,255,0))"></div>
<div class="a" style="left:790px;top:236px;width:24px;height:13px;background:radial-gradient(closest-side,rgba(196,220,246,.9),rgba(206,244,252,.8) 60%,rgba(255,255,255,0))"></div>
<div class="a" style="left:816px;top:238px;width:18px;height:11px;background:radial-gradient(closest-side,rgba(160,178,222,.85),rgba(204,242,252,.85) 55%,rgba(255,255,255,0))"></div>
<div class="a" style="left:842px;top:238px;width:14px;height:11px;background:radial-gradient(closest-side,rgba(176,196,240,.8),rgba(206,244,252,.8) 55%,rgba(255,255,255,0))"></div>
<div class="a" style="left:992px;top:708px;width:6px;height:16px;background:radial-gradient(closest-side,rgba(196,240,252,.95),rgba(255,255,255,0))"></div>
<div class="a" id="client" style="left:190px;top:249px;width:802px;height:482px;background:#e6e6fa;border:1px solid #858585;border-bottom-color:#a2a2a2"></div>
<div class="a" style="left:889px;top:221px;width:103px;height:19px;border:1px solid #8e8e8e;border-top:0;border-radius:0 0 5px 5px;background:linear-gradient(#fff,#f4f4f4)"></div>
<div class="a" style="left:917px;top:221px;width:1px;height:18px;background:#a8a8a8"></div>
<div class="a" style="left:944px;top:221px;width:1px;height:18px;background:#a8a8a8"></div>
<svg style="left:889px;top:220px" width="103" height="20" viewBox="0 0 103 20">
<rect x="9.5" y="10.5" width="11" height="4" rx="1" fill="#e4e4e4" stroke="#444" stroke-width="1"/>
<rect x="36.5" y="5.5" width="11" height="9" rx="1" fill="#f4f4f4" stroke="#c6c6c6" stroke-width="1"/>
<rect x="39.5" y="8.5" width="5" height="3" fill="none" stroke="#c6c6c6" stroke-width="1"/>
<path d="M74.5 5.5h3.300l2.200 2.700l2.200 -2.700h3.300l-3.700 4.5l3.700 4.5h-3.300l-2.200 -2.700l-2.200 2.700h-3.300l3.700 -4.5z" fill="#ececec" stroke="#444" stroke-width="1.100" stroke-linejoin="round"/>
</svg>
<div class="t" id="dtitle" style="left:473px;top:288px;font-size:21px;line-height:22px;color:#000;font-family:'Liberation Serif','Noto Serif CJK SC',serif"><span class="lat lat1">FX5U</span><span style="font-size:19.5px;letter-spacing:1.850px;-webkit-text-stroke:0.300px #000;margin-left:-0.100px">数字转字符串合并</span><span class="lat lat2">FB</span></div>
<svg style="left:0;top:0;width:0;height:0" width="0" height="0"><defs><linearGradient id="bvT" x1="0" y1="0" x2="0" y2="1"><stop offset="0" stop-color="#7ac2ff"/><stop offset="1" stop-color="#4c80b4"/></linearGradient><linearGradient id="bvL" x1="0" y1="0" x2="1" y2="0"><stop offset="0" stop-color="#7ac2ff"/><stop offset="1" stop-color="#4c80b4"/></linearGradient><linearGradient id="bvB" x1="0" y1="0" x2="0" y2="1"><stop offset="0" stop-color="#4c80b4"/><stop offset="1" stop-color="#18293f"/></linearGradient><linearGradient id="bvR" x1="0" y1="0" x2="1" y2="0"><stop offset="0" stop-color="#4c80b4"/><stop offset="1" stop-color="#18293f"/></linearGradient></defs></svg>
<style>.nt{font-size:22px;line-height:22px;color:#000}.lat{display:inline-block;font-size:22.5px;line-height:22px;transform:scaleX(0.76);transform-origin:0 50%;vertical-align:top}.lat1{width:43.5px}.lat2{width:22px;margin-left:-1.7px;transform:scaleX(0.81)}</style>
<svg style="left:281px;top:370px" width="80" height="40" viewBox="0 0 80 40"><rect x="4" y="4" width="71" height="31" fill="#eff1f1"/><path d="M0 0H80L75 4H4z" fill="url(#bvT)"/><path d="M0 0L4 4V35L0 40z" fill="url(#bvL)"/><path d="M0 40L4 35H75L80 40z" fill="url(#bvB)"/><path d="M80 0V40L75 35V4z" fill="url(#bvR)"/></svg><div class="t num nt" id="n1" style="left:294.5px;top:378px">2025</div>
<svg style="left:391px;top:370px" width="80" height="40" viewBox="0 0 80 40"><rect x="4" y="4" width="71" height="31" fill="#eff1f1"/><path d="M0 0H80L75 4H4z" fill="url(#bvT)"/><path d="M0 0L4 4V35L0 40z" fill="url(#bvL)"/><path d="M0 40L4 35H75L80 40z" fill="url(#bvB)"/><path d="M80 0V40L75 35V4z" fill="url(#bvR)"/></svg><div class="t num nt" id="n2" style="left:416.5px;top:378px">10</div>
<svg style="left:501px;top:370px" width="80" height="40" viewBox="0 0 80 40"><rect x="4" y="4" width="71" height="31" fill="#eff1f1"/><path d="M0 0H80L75 4H4z" fill="url(#bvT)"/><path d="M0 0L4 4V35L0 40z" fill="url(#bvL)"/><path d="M0 40L4 35H75L80 40z" fill="url(#bvB)"/><path d="M80 0V40L75 35V4z" fill="url(#bvR)"/></svg><div class="t num nt" id="n3" style="left:526.5px;top:378px">12</div>
<svg style="left:280px;top:442px" width="80" height="40" viewBox="0 0 80 40"><rect x="4" y="4" width="71" height="31" fill="#eff1f1"/><path d="M0 0H80L75 4H4z" fill="url(#bvT)"/><path d="M0 0L4 4V35L0 40z" fill="url(#bvL)"/><path d="M0 40L4 35H75L80 40z" fill="url(#bvB)"/><path d="M80 0V40L75 35V4z" fill="url(#bvR)"/></svg><div class="t num nt" id="n4" style="left:311px;top:450px">1</div>
<svg style="left:391px;top:440px" width="99" height="40" viewBox="0 0 99 40"><rect x="4" y="4" width="90" height="31" fill="#eff1f1"/><path d="M0 0H99L94 4H4z" fill="url(#bvT)"/><path d="M0 0L4 4V35L0 40z" fill="url(#bvL)"/><path d="M0 40L4 35H94L99 40z" fill="url(#bvB)"/><path d="M99 0V40L94 35V4z" fill="url(#bvR)"/></svg><div class="t num nt" id="n5" style="left:408px;top:448px">12345</div>
<svg style="left:274px;top:551px" width="321" height="40" viewBox="0 0 321 40"><rect x="4" y="4" width="312" height="31" fill="#eff1f1"/><path d="M0 0H321L316 4H4z" fill="url(#bvT)"/><path d="M0 0L4 4V35L0 40z" fill="url(#bvL)"/><path d="M0 40L4 35H316L321 40z" fill="url(#bvB)"/><path d="M321 0V40L316 35V4z" fill="url(#bvR)"/></svg><div class="t num nt" id="n6" style="left:303.5px;top:559px">202510120112345</div>
<div class="a" style="left:716px;top:407px;width:107px;height:51px;background:#b9bccb"></div>
<div class="a" style="left:718px;top:409px;width:103px;height:47px;background:#82dbff;border:1px solid #555a60"></div>
<div class="a" style="left:719px;top:410px;width:101px;height:1px;background:#c4f1ff"></div>
<div class="a" style="left:719px;top:453px;width:101px;height:2px;background:#4f81a6"></div>
<div class="a" style="left:204px;top:731px;width:54px;height:6px;background:#c4effb"></div>
<div class="a" style="left:472px;top:731px;width:114px;height:6px;background:#bfeafb"></div>
<div class="a" style="left:472px;top:731px;width:8px;height:6px;background:#a9c2ee"></div>
<div class="a" style="left:578px;top:731px;width:8px;height:6px;background:#a9c2ee"></div>
<svg style="left:984px;top:718px" width="16" height="22" viewBox="0 0 16 22"><path d="M1.5 1.5V17.5L5.200 14.200L8 20.5L10.600 19.400L7.900 13.300H13z" fill="#fff" stroke="#1a1a2a" stroke-width="1"/></svg>
</body>
</html>
